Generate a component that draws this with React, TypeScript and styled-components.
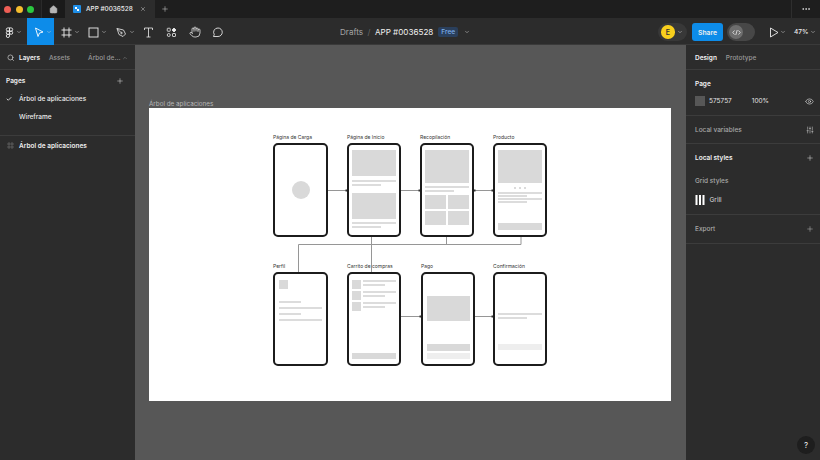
import React from 'react';
import styled, { createGlobalStyle } from 'styled-components';
import { ChevronDown, ChevronUp, Check, Eye, Hand, House, Plus, Search, X, Ellipsis, SlidersVertical } from 'lucide-react';

const GlobalStyle = createGlobalStyle`
  html, body { margin: 0; padding: 0; background: #2c2c2c; }
  body { font-family: Inter, "Liberation Sans", sans-serif; overflow: hidden; }
`;

const Page = styled.div`
  width: 820px;
  height: 460px;
  display: flex;
  flex-direction: column;
  overflow: hidden;
  position: relative;
  color: #fff;
  font-size: 6.5px;
`;

/* title bar */
const TitleBar = styled.div`
  height: 18px;
  display: flex;
  align-items: stretch;
  background: #1e1e1e;
`;
const Lights = styled.div`
  width: 41px;
  padding-left: 4px;
  box-sizing: border-box;
  display: flex;
  align-items: center;
  gap: 4.5px;
`;
const Light = styled.span<{ $c: string }>`
  width: 7px;
  height: 7px;
  border-radius: 50%;
  background: ${(p) => p.$c};
`;
const HomeTab = styled.div`
  width: 24px;
  display: flex;
  align-items: center;
  justify-content: center;
  color: #b5b5b5;
  background: #1a1a1a;
  border-left: 1px solid #2a2a2a;
  box-sizing: border-box;
`;
const ActiveTab = styled.div`
  width: 90px;
  display: flex;
  align-items: center;
  background: #2c2c2c;
  padding-left: 8px;
  box-sizing: border-box;
  font-size: 6.4px;
  font-weight: 500;
  color: #eee;
`;
const TabName = styled.span`
  margin-left: 5px;
  width: 54px;
  white-space: nowrap;
`;
const AddTab = styled.div`
  width: 19px;
  display: flex;
  align-items: center;
  justify-content: center;
  color: #ccc;
`;
const TitleEnd = styled.div`
  margin-left: auto;
  width: 29px;
  border-left: 1px solid #2e2e2e;
  display: flex;
  align-items: center;
  justify-content: center;
  color: #ddd;
  box-sizing: border-box;
`;

/* toolbar */
const Toolbar = styled.div`
  height: 27px;
  padding-top: 1px;
  display: flex;
  align-items: center;
  background: #2c2c2c;
  box-shadow: inset 0 -1px #3a3a3a;
  box-sizing: border-box;
  color: #eee;
`;
const ToolGroup = styled.div<{ $w: number; $pl?: number; $active?: boolean }>`
  height: 27px;
  margin-top: -1px;
  width: ${(p) => p.$w}px;
  flex: none;
  box-sizing: border-box;
  padding-top: 1px;
  padding-left: ${(p) => p.$pl ?? 0}px;
  display: flex;
  align-items: center;
  justify-content: ${(p) => (p.$pl ? 'flex-start' : 'center')};
  gap: 2px;
  background: ${(p) => (p.$active ? '#0d8ce9' : 'transparent')};
`;
const Breadcrumb = styled.div`
  margin-left: 112px;
  display: flex;
  align-items: center;
  font-size: 8.1px;
  width: 134px;
  white-space: nowrap;
  flex: none;
`;
const Crumb = styled.span`
  color: #a5a5a5;
`;
const Slash = styled.span`
  color: #666;
  margin: 0 4.5px;
`;
const FileName = styled.span`
  color: #f0f0f0;
`;
const FreeBadge = styled.span`
  margin-left: 5px;
  margin-right: 6px;
  padding: 1px 3px;
  background: #2a3f5c;
  color: #7fb0ea;
  border-radius: 2px;
  font-size: 6.5px;
  font-weight: 500;
`;
const AvatarPill = styled.div`
  margin-left: 184px;
  width: 29px;
  height: 18px;
  flex: none;
  border-radius: 9px;
  background: #383838;
  display: flex;
  align-items: center;
  padding-left: 3px;
  box-sizing: border-box;
  gap: 2px;
`;
const Avatar = styled.span`
  width: 13.5px;
  height: 13.5px;
  border-radius: 50%;
  background: #f8cf1d;
  color: #333;
  font-size: 7px;
  font-weight: 600;
  display: flex;
  align-items: center;
  justify-content: center;
`;
const ShareButton = styled.div`
  margin-left: 5px;
  width: 31px;
  height: 18px;
  flex: none;
  background: #0d8ce9;
  border-radius: 3px;
  font-size: 6.8px;
  font-weight: 600;
  display: flex;
  align-items: center;
  justify-content: center;
`;
const DevToggle = styled.div`
  margin-left: 4px;
  width: 28px;
  height: 18px;
  flex: none;
  border-radius: 9px;
  background: #474747;
  display: flex;
  align-items: center;
  padding-left: 2px;
  box-sizing: border-box;
`;
const DevKnob = styled.span`
  width: 14px;
  height: 14px;
  border-radius: 50%;
  background: #6e6e6e;
  display: flex;
  align-items: center;
  justify-content: center;
`;
const PlayGroup = styled.div`
  margin-left: 13.5px;
  display: flex;
  align-items: center;
  gap: 1px;
  flex: none;
`;
const Zoom = styled.div`
  margin-left: 8.5px;
  display: flex;
  align-items: center;
  gap: 2px;
  font-size: 6.5px;
  font-weight: 500;
  flex: none;
`;

/* body */
const Main = styled.div`
  flex: 1;
  display: flex;
  min-height: 0;
`;
const Panel = styled.div<{ $w: number }>`
  width: ${(p) => p.$w}px;
  flex: none;
  background: #2c2c2c;
  box-sizing: border-box;
  display: flex;
  flex-direction: column;
`;
const PanelSection = styled.div<{ $h: number; $pad?: number; $pr?: number }>`
  height: ${(p) => p.$h}px;
  border-bottom: 1px solid #3c3c3c;
  box-sizing: border-box;
  padding: 0 ${(p) => p.$pr ?? 6}px 0 ${(p) => p.$pad ?? 9}px;
  flex: none;
`;
const RowBetween = styled.div<{ $h?: number }>`
  height: ${(p) => p.$h ?? 14}px;
  display: flex;
  align-items: center;
  justify-content: space-between;
`;
const TabRow = styled.div`
  height: 100%;
  padding-top: 1px;
  box-sizing: border-box;
  display: flex;
  align-items: center;
  font-size: 6.5px;
  font-weight: 500;
`;
const TabLabel = styled.span<{ $on?: boolean; $ml?: number }>`
  color: ${(p) => (p.$on ? '#f2f2f2' : '#9a9a9a')};
  font-weight: ${(p) => (p.$on ? 600 : 500)};
  margin-left: ${(p) => p.$ml ?? 0}px;
  white-space: nowrap;
`;
const SectionTitle = styled.span`
  font-size: 6.5px;
  font-weight: 600;
  color: #f0f0f0;
`;
const MutedTitle = styled.span`
  font-size: 6.5px;
  font-weight: 500;
  color: #a8a8a8;
`;
const PageList = styled.div`
  margin-top: -2px;
`;
const PageItem = styled.div`
  height: 18px;
  display: flex;
  align-items: center;
  font-size: 6.5px;
  font-weight: 500;
  color: #eee;
`;
const CheckSlot = styled.span`
  width: 13px;
  display: flex;
  justify-content: flex-start;
`;
const LayerRow = styled.div`
  height: 19px;
  padding-left: 7px;
  display: flex;
  align-items: center;
  gap: 5px;
  font-size: 6.5px;
  font-weight: 600;
  color: #eee;
`;

/* canvas */
const Canvas = styled.div`
  flex: 1;
  background: #575757;
  position: relative;
  min-width: 0;
`;
const FrameLabel = styled.div`
  position: absolute;
  left: 14px;
  top: 55px;
  font-size: 6.3px;
  color: #b8b8b8;
`;
const Frame = styled.div`
  position: absolute;
  left: 14px;
  top: 63px;
  width: 522px;
  height: 293px;
  background: #fff;
`;
const Wires = styled.svg`
  position: absolute;
  left: 0;
  top: 0;
  width: 522px;
  height: 293px;
`;
const Node = styled.div<{ $x: number; $y: number }>`
  position: absolute;
  left: ${(p) => p.$x}px;
  top: ${(p) => p.$y}px;
`;
const NodeLabel = styled.div`
  font-size: 5px;
  line-height: 6px;
  height: 9px;
  color: #333;
  white-space: nowrap;
`;
const Phone = styled.div<{ $w?: number; $pad?: number }>`
  width: ${(p) => p.$w ?? 54}px;
  height: 94px;
  box-sizing: border-box;
  border: 2px solid #1c1c1c;
  border-radius: 5px;
  background: #fff;
  padding: 5px ${(p) => p.$pad ?? 3}px 5px;
  display: flex;
  flex-direction: column;
`;
const Gray = styled.div<{ $h: number; $w?: number; $mt?: number; $c?: string }>`
  height: ${(p) => p.$h}px;
  width: ${(p) => (p.$w ? `${p.$w}px` : '100%')};
  margin-top: ${(p) => p.$mt ?? 0}px;
  background: ${(p) => p.$c ?? '#d9d9d9'};
  flex: none;
`;
const Push = styled.div`
  margin-top: auto;
`;
const Circle = styled.div`
  width: 18px;
  height: 18px;
  border-radius: 50%;
  background: #d9d9d9;
  margin: auto;
`;
const TileGrid = styled.div`
  display: grid;
  grid-template-columns: 1fr 1fr;
  gap: 2px;
  margin-top: 3px;
`;
const Dots = styled.div`
  display: flex;
  justify-content: center;
  gap: 3px;
  margin-top: 3.5px;
`;
const Dot = styled.span`
  width: 2px;
  height: 2px;
  background: #cfcfcf;
  border-radius: 50%;
`;
const CartRow = styled.div`
  display: flex;
  gap: 2px;
  margin-top: 1px;
  margin-bottom: 1px;
`;
const CartText = styled.div`
  flex: 1;
`;
const Spacer = styled.div<{ $h: number }>`
  height: ${(p) => p.$h}px;
  flex: none;
`;

const HelpButton = styled.div`
  position: absolute;
  right: 5px;
  bottom: 6px;
  width: 18px;
  height: 18px;
  border-radius: 50%;
  background: #1e1e1e;
  font-size: 8px;
  color: #eee;
  display: flex;
  align-items: center;
  justify-content: center;
`;
const ColorRow = styled.div`
  height: 14px;
  margin-top: -3px;
  display: flex;
  align-items: center;
  font-size: 6.5px;
  color: #e4e4e4;
`;
const Swatch = styled.span`
  width: 10px;
  height: 10px;
  background: #575757;
  margin-right: 4px;
`;
const Percent = styled.span`
  margin-left: 20px;
`;
const EyeSlot = styled.span`
  margin-left: auto;
  display: flex;
`;
const GrillRow = styled.div`
  height: 14px;
  margin-top: 4px;
  display: flex;
  align-items: center;
  gap: 4.5px;
  font-size: 6.5px;
  color: #ddd;
`;
const GridGlyph = styled.svg`
  width: 10px;
  height: 10px;
  flex: none;
`;

const Chev = () => <ChevronDown size={6} strokeWidth={2} color="#ccc" />;

const FigmaMark = () => (
  <svg width="9" height="11" viewBox="0 0 18 24" fill="none" stroke="#eee" strokeWidth="2">
    <path d="M9 2H5.5a3.5 3.5 0 0 0 0 7H9zM9 9H5.5a3.5 3.5 0 0 0 0 7H9zM9 16H5.5A3.5 3.5 0 1 0 9 19.5zM9 2h3.5a3.5 3.5 0 0 1 0 7H9z" />
    <circle cx="12.5" cy="12.5" r="3.5" />
  </svg>
);
const CursorIcon = () => (
  <svg width="10" height="11" viewBox="0 0 20 22" fill="none" stroke="#fff" strokeWidth="1.8" strokeLinejoin="round">
    <path d="M3 2l15 8-7 2-3 7z" />
  </svg>
);
const FrameIcon = () => (
  <svg width="11" height="11" viewBox="0 0 22 22" fill="none" stroke="#eee" strokeWidth="1.8">
    <path d="M6 1v20M16 1v20M1 6h20M1 16h20" />
  </svg>
);
const RectIcon = () => (
  <svg width="11" height="11" viewBox="0 0 22 22" fill="none" stroke="#eee" strokeWidth="1.8">
    <rect x="2" y="2" width="18" height="18" />
  </svg>
);
const PenIcon = () => (
  <svg width="11" height="11" viewBox="0 0 22 22" fill="none" stroke="#eee" strokeWidth="1.6" strokeLinejoin="round">
    <path d="M2 3l13 3 4 8-5 5-8-4z" />
    <path d="M2 3l8 8" />
    <circle cx="11" cy="12" r="1.5" />
  </svg>
);
const TextIcon = () => (
  <svg width="11" height="11" viewBox="0 0 22 22" fill="none" stroke="#eee" strokeWidth="1.6">
    <path d="M3 6V2h16v4M11 2v18M7 20h8" />
  </svg>
);
const ResourcesIcon = () => (
  <svg width="11" height="11" viewBox="0 0 22 22" fill="none" stroke="#eee" strokeWidth="1.6">
    <rect x="2.5" y="2.5" width="6" height="6" rx="1" />
    <path d="M16 2l4 4-4 4-4-4z" fill="#eee" />
    <circle cx="5.5" cy="16" r="3" />
    <rect x="13" y="13" width="6" height="6" rx="1" />
  </svg>
);
const CommentIcon = () => (
  <svg width="11" height="11" viewBox="0 0 22 22" fill="none" stroke="#eee" strokeWidth="1.7" strokeLinejoin="round">
    <path d="M12 2a8.5 8.5 0 0 1 0 17H3l1.5-4A8.5 8.5 0 0 1 12 2z" />
  </svg>
);
const PlayIcon = () => (
  <svg width="10" height="11" viewBox="0 0 20 22" fill="none" stroke="#eee" strokeWidth="1.8" strokeLinejoin="round">
    <path d="M3 2l15 9-15 9z" />
  </svg>
);
const TabIcon = () => (
  <svg width="8" height="8" viewBox="0 0 16 16">
    <rect width="16" height="16" rx="2" fill="#1f8fe8" />
    <path d="M4 4h4v4H4zM8 8h4v4H8z" fill="#fff" />
  </svg>
);
const DevIcon = () => (
  <svg width="9" height="7" viewBox="0 0 18 14" fill="none" stroke="#ddd" strokeWidth="1.8">
    <path d="M5 3L1.5 7 5 11M13 3l3.5 4L13 11M10.5 2l-3 10" />
  </svg>
);
const LayerFrameIcon = () => (
  <svg width="7" height="7" viewBox="0 0 14 14" fill="none" stroke="#777" strokeWidth="1.2">
    <path d="M4 0v14M10 0v14M0 4h14M0 10h14" />
  </svg>
);

const Line = ({ w, mt }: { w?: number; mt: number }) => <Gray $h={2} $w={w} $mt={mt} $c="#dcdcdc" />;

const CartItem = () => (
  <CartRow>
    <Gray $h={9} $w={9} />
    <CartText>
      <Line mt={0} />
      <Line w={22} mt={1.5} />
    </CartText>
  </CartRow>
);

const App: React.FC = () => {
  return (
    <Page>
      <GlobalStyle />
      <TitleBar>
        <Lights>
          <Light $c="#ee5e55" />
          <Light $c="#f5bd2e" />
          <Light $c="#2bc840" />
        </Lights>
        <HomeTab>
          <House size={9} fill="#b5b5b5" strokeWidth={1.5} />
        </HomeTab>
        <ActiveTab>
          <TabIcon />
          <TabName>APP #0036528</TabName>
          <X size={6} strokeWidth={2} color="#ccc" />
        </ActiveTab>
        <AddTab>
          <Plus size={8} strokeWidth={1.6} />
        </AddTab>
        <TitleEnd>
          <Ellipsis size={10} strokeWidth={2} />
        </TitleEnd>
      </TitleBar>

      <Toolbar>
        <ToolGroup $w={26.5}>
          <FigmaMark />
          <Chev />
        </ToolGroup>
        <ToolGroup $w={27.5} $pl={7} $active>
          <CursorIcon />
          <Chev />
        </ToolGroup>
        <ToolGroup $w={27} $pl={6.5}>
          <FrameIcon />
          <Chev />
        </ToolGroup>
        <ToolGroup $w={28} $pl={6.5}>
          <RectIcon />
          <Chev />
        </ToolGroup>
        <ToolGroup $w={27} $pl={6.5}>
          <PenIcon />
          <Chev />
        </ToolGroup>
        <ToolGroup $w={24}>
          <TextIcon />
        </ToolGroup>
        <ToolGroup $w={23}>
          <ResourcesIcon />
        </ToolGroup>
        <ToolGroup $w={23}>
          <Hand size={12} strokeWidth={1.5} />
        </ToolGroup>
        <ToolGroup $w={22}>
          <CommentIcon />
        </ToolGroup>
        <Breadcrumb>
          <Crumb>Drafts</Crumb>
          <Slash>/</Slash>
          <FileName>APP #0036528</FileName>
          <FreeBadge>Free</FreeBadge>
          <Chev />
        </Breadcrumb>
        <AvatarPill>
          <Avatar>E</Avatar>
          <Chev />
        </AvatarPill>
        <ShareButton>Share</ShareButton>
        <DevToggle>
          <DevKnob>
            <DevIcon />
          </DevKnob>
        </DevToggle>
        <PlayGroup>
          <PlayIcon />
          <Chev />
        </PlayGroup>
        <Zoom>
          47%
          <Chev />
        </Zoom>
      </Toolbar>

      <Main>
        <Panel $w={135}>
          <PanelSection $h={25} $pad={7}>
            <TabRow>
              <Search size={7.5} strokeWidth={2} color="#ddd" />
              <TabLabel $on $ml={4.5}>Layers</TabLabel>
              <TabLabel $ml={9}>Assets</TabLabel>
              <TabLabel $ml={18}>Árbol de...</TabLabel>
              <ChevronUp size={6} color="#888" style={{ marginLeft: 2 }} />
            </TabRow>
          </PanelSection>
          <PanelSection $h={66} $pad={6} $pr={11}>
            <RowBetween $h={22}>
              <SectionTitle>Pages</SectionTitle>
              <Plus size={8} strokeWidth={1.5} color="#ddd" />
            </RowBetween>
            <PageList>
              <PageItem>
                <CheckSlot>
                  <Check size={6} strokeWidth={3} color="#fff" />
                </CheckSlot>
                Árbol de aplicaciones
              </PageItem>
              <PageItem>
                <CheckSlot />
                Wireframe
              </PageItem>
            </PageList>
          </PanelSection>
          <LayerRow>
            <LayerFrameIcon />
            Árbol de aplicaciones
          </LayerRow>
        </Panel>

        <Canvas>
          <FrameLabel>Árbol de aplicaciones</FrameLabel>
          <Frame>
            <Wires viewBox="0 0 522 293" fill="none">
              <g stroke="#969696" strokeWidth="1">
                <path d="M178 82.5h20M251 82.5h20M324 82.5h20" />
                <path d="M149.5 136.5H372v-8M222.5 128v36M297.5 128v8.5M149.5 136.5V164" />
                <path d="M251 208.5h21M325 208.5h19" />
              </g>
              <g fill="#333">
                <path d="M196.5 81.5h2v2h-2zM269.5 81.5h2v2h-2zM342.5 81.5h2v2h-2z" />
                <path d="M325 81.5h1.5v2H325z" />
                <path d="M270.5 207.5h2v2h-2zM342.5 207.5h2v2h-2z" />
              </g>
            </Wires>
            <Node $x={124} $y={26}>
              <NodeLabel>Página de Carga</NodeLabel>
              <Phone $w={55}>
                <Circle />
              </Phone>
            </Node>
            <Node $x={198} $y={26}>
              <NodeLabel>Página de Inicio</NodeLabel>
              <Phone>
                <Gray $h={26} />
                <Line mt={4} />
                <Line w={29} mt={1.5} />
                <Gray $h={26} $mt={7.5} />
                <Line mt={3} />
                <Line w={29} mt={1.5} />
              </Phone>
            </Node>
            <Node $x={271} $y={26}>
              <NodeLabel>Recopilación</NodeLabel>
              <Phone>
                <Gray $h={33} />
                <Line mt={3} />
                <Line w={29} mt={2} />
                <TileGrid>
                  <Gray $h={14} />
                  <Gray $h={14} />
                  <Gray $h={14} />
                  <Gray $h={14} />
                </TileGrid>
              </Phone>
            </Node>
            <Node $x={344} $y={26}>
              <NodeLabel>Producto</NodeLabel>
              <Phone>
                <Gray $h={33} />
                <Dots>
                  <Dot />
                  <Dot />
                  <Dot />
                </Dots>
                <Line mt={3} />
                <Line w={29} mt={1.3} />
                <Line mt={1.3} />
                <Line w={29} mt={1.3} />
                <Push />
                <Gray $h={7} />
              </Phone>
            </Node>

            <Node $x={124} $y={155}>
              <NodeLabel>Perfil</NodeLabel>
              <Phone $w={55} $pad={4}>
                <Spacer $h={1} />
                <Gray $h={8.5} $w={9} />
                <Line w={22} mt={12} />
                <Line mt={4.3} />
                <Line w={22} mt={4.3} />
                <Line mt={4.3} />
              </Phone>
            </Node>
            <Node $x={198} $y={155}>
              <NodeLabel>Carrito de compras</NodeLabel>
              <Phone>
                <CartItem />
                <CartItem />
                <CartItem />
                <Push />
                <Gray $h={6.5} />
              </Phone>
            </Node>
            <Node $x={272} $y={155}>
              <NodeLabel>Pago</NodeLabel>
              <Phone $pad={3.5}>
                <Spacer $h={17} />
                <Gray $h={25} />
                <Push />
                <Gray $h={6.5} />
                <Gray $h={6.5} $mt={2} $c="#eeeeee" />
              </Phone>
            </Node>
            <Node $x={344} $y={155}>
              <NodeLabel>Confirmación</NodeLabel>
              <Phone>
                <Spacer $h={34.3} />
                <Line mt={0} />
                <Line w={29} mt={1.4} />
                <Spacer $h={25} />
                <Gray $h={6.5} $c="#eeeeee" />
              </Phone>
            </Node>
          </Frame>
        </Canvas>

        <Panel $w={134}>
          <PanelSection $h={25}>
            <TabRow>
              <TabLabel $on>Design</TabLabel>
              <TabLabel $ml={9}>Prototype</TabLabel>
            </TabRow>
          </PanelSection>
          <PanelSection $h={46}>
            <RowBetween $h={27}>
              <SectionTitle>Page</SectionTitle>
            </RowBetween>
            <ColorRow>
              <Swatch />
              575757
              <Percent>100%</Percent>
              <EyeSlot>
                <Eye size={9} strokeWidth={1.6} color="#ddd" />
              </EyeSlot>
            </ColorRow>
          </PanelSection>
          <PanelSection $h={28}>
            <RowBetween $h={27}>
              <MutedTitle>Local variables</MutedTitle>
              <SlidersVertical size={8} strokeWidth={1.5} color="#ddd" />
            </RowBetween>
          </PanelSection>
          <PanelSection $h={71}>
            <RowBetween $h={28}>
              <SectionTitle>Local styles</SectionTitle>
              <Plus size={8} strokeWidth={1.5} color="#ddd" />
            </RowBetween>
            <RowBetween $h={17}>
              <MutedTitle>Grid styles</MutedTitle>
            </RowBetween>
            <GrillRow>
              <GridGlyph viewBox="0 0 10 10" fill="#fff">
                <rect x="0.5" width="2" height="10" />
                <rect x="4" width="2" height="10" />
                <rect x="7.5" width="2" height="10" />
              </GridGlyph>
              Grill
            </GrillRow>
          </PanelSection>
          <PanelSection $h={29}>
            <RowBetween $h={28}>
              <MutedTitle>Export</MutedTitle>
              <Plus size={8} strokeWidth={1.5} color="#bbb" />
            </RowBetween>
          </PanelSection>
        </Panel>
      </Main>
      <HelpButton>?</HelpButton>
    </Page>
  );
};

export default App;
